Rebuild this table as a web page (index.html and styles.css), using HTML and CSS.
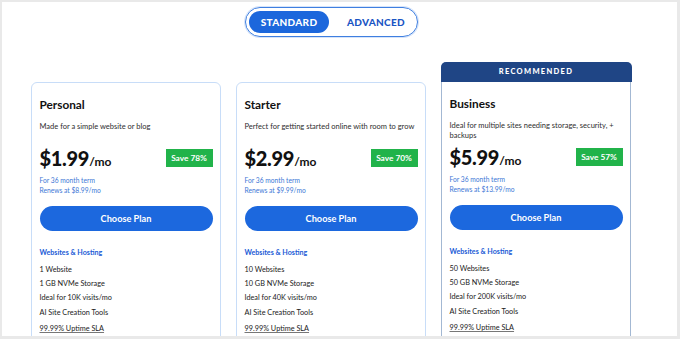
FILE: index.html
```html
<!DOCTYPE html>
<html>
<head>
<meta charset="utf-8">
<link rel="stylesheet" href="styles.css">
</head>
<body>
<div class="frame">
  <div class="content">
    <div class="toggle-row">
      <div class="toggle">
        <span class="seg active">STANDARD</span>
        <span class="seg other">ADVANCED</span>
      </div>
    </div>
    <div class="cards">
      <div class="card plain">
        <div class="card-body">
          <h2 class="title">Personal</h2>
          <p class="desc">Made for a simple website or blog</p>
          <div class="price-row">
            <div class="price"><span class="amt">$1.99</span><span class="per">/mo</span></div>
            <span class="save">Save 78%</span>
          </div>
          <p class="term">For 36 month term</p>
          <p class="term">Renews at $8.99/mo</p>
          <button class="btn">Choose Plan</button>
          <h3 class="group">Websites &amp; Hosting</h3>
          <ul class="features">
            <li>1 Website</li>
            <li>1 GB NVMe Storage</li>
            <li>Ideal for 10K visits/mo</li>
            <li>AI Site Creation Tools</li>
            <li class="sla">99.99% Uptime SLA</li>
          </ul>
        </div>
      </div>
      <div class="card plain">
        <div class="card-body">
          <h2 class="title">Starter</h2>
          <p class="desc">Perfect for getting started online with room to grow</p>
          <div class="price-row">
            <div class="price"><span class="amt">$2.99</span><span class="per">/mo</span></div>
            <span class="save">Save 70%</span>
          </div>
          <p class="term">For 36 month term</p>
          <p class="term">Renews at $9.99/mo</p>
          <button class="btn">Choose Plan</button>
          <h3 class="group">Websites &amp; Hosting</h3>
          <ul class="features">
            <li>10 Websites</li>
            <li>10 GB NVMe Storage</li>
            <li>Ideal for 40K visits/mo</li>
            <li>AI Site Creation Tools</li>
            <li class="sla">99.99% Uptime SLA</li>
          </ul>
        </div>
      </div>
      <div class="card featured">
        <div class="ribbon">RECOMMENDED</div>
        <div class="card-body">
          <h2 class="title">Business</h2>
          <p class="desc">Ideal for multiple sites needing storage, security, + backups</p>
          <div class="price-row">
            <div class="price"><span class="amt">$5.99</span><span class="per">/mo</span></div>
            <span class="save">Save 57%</span>
          </div>
          <p class="term">For 36 month term</p>
          <p class="term">Renews at $13.99/mo</p>
          <button class="btn">Choose Plan</button>
          <h3 class="group">Websites &amp; Hosting</h3>
          <ul class="features">
            <li>50 Websites</li>
            <li>50 GB NVMe Storage</li>
            <li>Ideal for 200K visits/mo</li>
            <li>AI Site Creation Tools</li>
            <li class="sla">99.99% Uptime SLA</li>
          </ul>
        </div>
      </div>
    </div>
  </div>
</div>
</body>
</html>
```
FILE: styles.css
```css
* { box-sizing: border-box; }
html, body { margin: 0; padding: 0; background: #fff; }
body { font-family: "Lato", "Liberation Sans", sans-serif; color: #1b1b1b; }
.frame {
  width: 680px;
  height: 339px;
  border-top: 2px solid #e9e9e9;
  border-left: 2px solid #e9e9e9;
  border-right: 3px solid #e9e9e9;
  border-bottom: 3px solid #e9e9e9;
  overflow: hidden;
  background: #fff;
}
.content { width: 601px; margin-left: 29px; }
.toggle-row { display: flex; justify-content: center; padding-top: 5px; }
.toggle {
  display: flex;
  align-items: center;
  height: 30px;
  padding: 0 3px;
  border: 1.5px solid #3f7fe0;
  border-radius: 15px;
  box-shadow: 0 0 0 1px #d6e4fa;
}
.seg {
  font-size: 10px;
  font-weight: 900;
  letter-spacing: 0.3px;
  height: 22px;
  line-height: 22px;
  border-radius: 11px;
}
.seg.active { background: #1c67dc; color: #fff; width: 80px; text-align: center; }
.seg.other { color: #1a55c4; padding: 0 9px 0 18px; }
.cards {
  display: flex;
  align-items: flex-start;
  gap: 15px;
  margin-top: 25px;
}
.card {
  width: 190px;
  height: 300px;
  border: 1.5px solid #c8ddf8;
  border-radius: 6px;
  background: #fff;
}
.card.plain { margin-top: 20px; }
.card.featured { border-color: #a3b8d3; border-top: none; border-radius: 6px 6px 0 0; height: 320px; }
.ribbon {
  height: 20px;
  margin: 0 -1.5px;
  background: #1f4585;
  border-radius: 5px 5px 0 0;
  color: #fff;
  font-size: 7.5px;
  font-weight: 900;
  letter-spacing: 1.3px;
  line-height: 20px;
  text-align: center;
}
.card-body { padding: 14px 7.5px 0 7.5px; }
.title { margin: 0; font-size: 11.8px; font-weight: 700; line-height: 15px; color: #111; }
.desc { margin: 10px 0 0; font-size: 7.5px; line-height: 10px; color: #2e2e2e; min-height: 20px; }
.price-row { display: flex; justify-content: space-between; align-items: center; margin-top: 6px; height: 20px; }
.price { color: #111; }
.amt { font-size: 20px; font-weight: 900; letter-spacing: -0.3px; }
.per { font-size: 12px; font-weight: 700; }
.save {
  background: #21b34a;
  color: #fff;
  font-size: 8.3px;
  font-weight: 700;
  width: 47px;
  height: 18px;
  line-height: 18px;
  text-align: center;
}
.term { margin: 0; font-size: 6.7px; line-height: 10px; color: #3d78d6; }
.price-row + .term { margin-top: 7px; }
.btn {
  display: block;
  width: 100%;
  height: 25px;
  margin-top: 11px;
  border: none;
  border-radius: 13px;
  background: #1c68de;
  color: #fff;
  font-family: inherit;
  font-size: 9.2px;
  font-weight: 700;
}
.group { margin: 16px 0 0; font-size: 7.1px; font-weight: 700; line-height: 12px; color: #1a5bd6; }
.features { list-style: none; margin: 4px 0 0; padding: 0; }
.features li { font-size: 7.3px; line-height: 14.2px; color: #222; }
.features li.sla { text-decoration: underline; text-decoration-color: #777; margin-top: 2px; }
```
